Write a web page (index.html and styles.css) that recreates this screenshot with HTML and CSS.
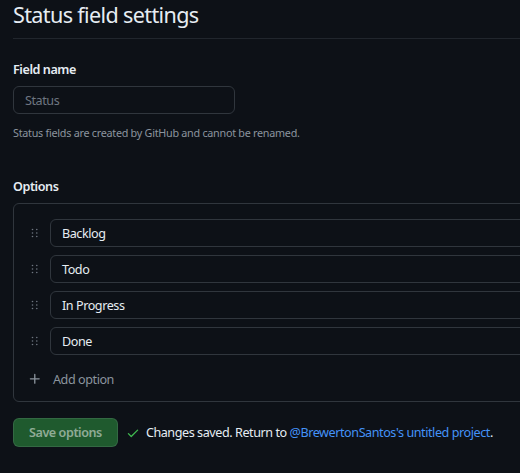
FILE: index.html
```html
<!DOCTYPE html>
<html lang="en">
<head>
<meta charset="utf-8">
<title>Status field settings</title>
<link rel="stylesheet" href="styles.css">
</head>
<body>
<div class="page">
  <h2 class="subhead">Status field settings</h2>

  <div class="field">
    <label class="field-label">Field name</label>
    <div class="text-input disabled"><span class="placeholder">Status</span></div>
    <p class="note">Status fields are created by GitHub and cannot be renamed.</p>
  </div>

  <div class="field options">
    <label class="field-label">Options</label>
    <div class="options-box">
      <div class="opt-row">
        <svg class="grip" viewBox="0 0 16 16" width="16" height="16"><circle cx="4.5" cy="4.5" r="0.8"/><circle cx="8.8" cy="4.5" r="0.8"/><circle cx="4.5" cy="8" r="0.8"/><circle cx="8.8" cy="8" r="0.8"/><circle cx="4.5" cy="11.5" r="0.8"/><circle cx="8.8" cy="11.5" r="0.8"/></svg>
        <div class="text-input opt">Backlog</div>
      </div>
      <div class="opt-row">
        <svg class="grip" viewBox="0 0 16 16" width="16" height="16"><circle cx="4.5" cy="4.5" r="0.8"/><circle cx="8.8" cy="4.5" r="0.8"/><circle cx="4.5" cy="8" r="0.8"/><circle cx="8.8" cy="8" r="0.8"/><circle cx="4.5" cy="11.5" r="0.8"/><circle cx="8.8" cy="11.5" r="0.8"/></svg>
        <div class="text-input opt">Todo</div>
      </div>
      <div class="opt-row">
        <svg class="grip" viewBox="0 0 16 16" width="16" height="16"><circle cx="4.5" cy="4.5" r="0.8"/><circle cx="8.8" cy="4.5" r="0.8"/><circle cx="4.5" cy="8" r="0.8"/><circle cx="8.8" cy="8" r="0.8"/><circle cx="4.5" cy="11.5" r="0.8"/><circle cx="8.8" cy="11.5" r="0.8"/></svg>
        <div class="text-input opt">In Progress</div>
      </div>
      <div class="opt-row">
        <svg class="grip" viewBox="0 0 16 16" width="16" height="16"><circle cx="4.5" cy="4.5" r="0.8"/><circle cx="8.8" cy="4.5" r="0.8"/><circle cx="4.5" cy="8" r="0.8"/><circle cx="8.8" cy="8" r="0.8"/><circle cx="4.5" cy="11.5" r="0.8"/><circle cx="8.8" cy="11.5" r="0.8"/></svg>
        <div class="text-input opt">Done</div>
      </div>
      <div class="add-row">
        <svg class="plus" viewBox="0 0 16 16" width="14" height="14"><path d="M7.75 2a.75.75 0 0 1 .75.75V7h4.25a.75.75 0 0 1 0 1.5H8.5v4.25a.75.75 0 0 1-1.5 0V8.5H2.75a.75.75 0 0 1 0-1.5H7V2.75A.75.75 0 0 1 7.75 2Z"/></svg>
        <span class="add-label">Add option</span>
      </div>
    </div>
  </div>

  <div class="actions">
    <button class="btn-save" disabled>Save options</button>
    <svg class="check" viewBox="0 0 16 16" width="14" height="14"><path d="M13.78 4.22a.75.75 0 0 1 0 1.06l-7.25 7.25a.75.75 0 0 1-1.06 0L2.22 9.28a.75.75 0 0 1 1.06-1.06L6 10.94l6.72-6.72a.75.75 0 0 1 1.06 0Z"/></svg>
    <span class="saved">Changes saved. Return to <a class="link" href="#">@BrewertonSantos's untitled project</a>.</span>
  </div>
</div>
</body>
</html>
```

FILE: styles.css
```css
html, body {
  margin: 0;
  padding: 0;
  background: #0d1117;
  overflow: hidden;
}

body {
  font-family: "Noto Sans", "Liberation Sans", sans-serif;
  color: #e6edf3;
  font-size: 12.6px;
  letter-spacing: -0.035em;
}

.page {
  width: 640px;
  padding-left: 13px;
}

.subhead {
  margin: 0;
  font-size: 21.6px;
  font-weight: 400;
  line-height: 30px;
  letter-spacing: -0.03em;
  padding-bottom: 8px;
  border-bottom: 1px solid #21262d;
  color: #e6edf3;
}

.field {
  margin-top: 22px;
}

.field-label {
  display: block;
  font-weight: 600;
  font-size: 12.6px;
  line-height: 18px;
  margin-bottom: 7px;
}

.text-input {
  box-sizing: border-box;
  height: 28px;
  border: 1px solid #30363d;
  border-radius: 6px;
  padding: 0 11px;
  display: flex;
  align-items: center;
  font-size: 12.6px;
}

.text-input.disabled {
  width: 222px;
}

.placeholder {
  color: #6e7681;
}

.note {
  margin: 11px 0 0;
  font-size: 10.8px;
  line-height: 16px;
  letter-spacing: -0.025em;
  color: #8b949e;
}

.options {
  margin-top: 37px;
}

.options-box {
  border: 1px solid #30363d;
  border-radius: 6px;
  padding: 15px 0 6px 14px;
  display: flex;
  flex-direction: column;
  gap: 8px;
}

.opt-row {
  display: flex;
  align-items: center;
  gap: 6px;
}

.grip {
  fill: #6e7681;
  flex: none;
}

.text-input.opt {
  flex: 1;
  color: #e6edf3;
}

.add-row {
  height: 32px;
  display: flex;
  align-items: center;
  gap: 11px;
}

.plus {
  fill: #8b949e;
}

.add-label {
  color: #8b949e;
  font-size: 12.6px;
}

.actions {
  margin-top: 16px;
  display: flex;
  align-items: center;
}

.btn-save {
  height: 29px;
  padding: 0 15px;
  border: 1px solid rgba(240, 246, 252, 0.1);
  border-radius: 6px;
  background: #1f5a2e;
  color: rgba(255, 255, 255, 0.5);
  font-family: inherit;
  font-size: 12.6px;
  font-weight: 600;
  letter-spacing: inherit;
}

.check {
  fill: #3fb950;
  margin-left: 8px;
}

.saved {
  margin-left: 6px;
  font-size: 12.6px;
}

.link {
  color: #4493f8;
  text-decoration: none;
}
```
